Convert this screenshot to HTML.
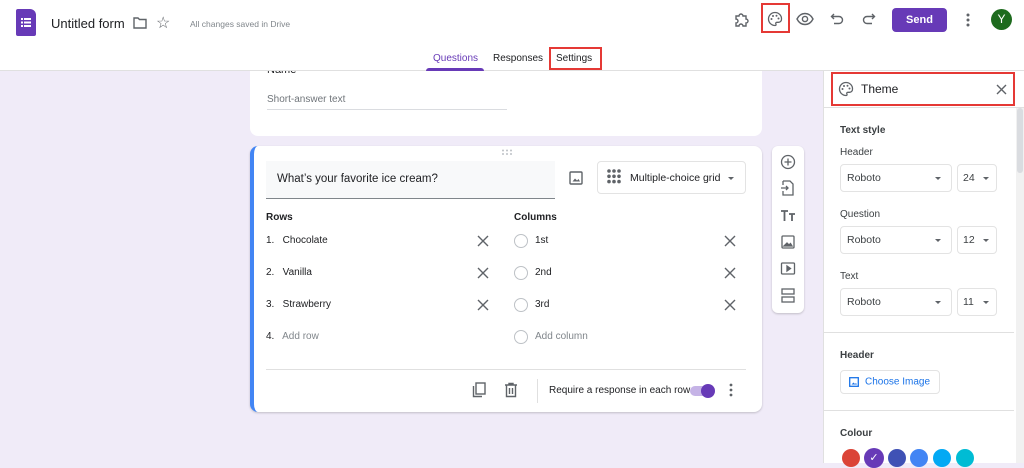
<!DOCTYPE html>
<html><head><meta charset="utf-8"><style>
*{box-sizing:border-box;margin:0;padding:0}
body{width:1024px;height:463px;overflow:hidden;background:#f0ebf8;font-family:"Liberation Sans",Arial,sans-serif;color:#202124;position:relative}
.a{position:absolute}
.t{position:absolute;white-space:nowrap}
.sel{position:absolute;border:1px solid #e3e3e3;border-radius:4px;background:#fff;font-size:10.5px;color:#3c4043}
.sel span{position:absolute;top:50%;transform:translateY(-50%)}
.car{position:absolute;width:0;height:0;border-left:3.5px solid transparent;border-right:3.5px solid transparent;border-top:3.5px solid #5f6368}
.rad{position:absolute;width:14px;height:14px;border:1.5px solid #bdc1c6;border-radius:50%}
.f{font-size:10px}
</style></head><body>
<div class="a" style="left:0;top:0;width:1024px;height:71px;background:#fff;border-bottom:1px solid #e0e0e0"></div>
<div class="a" style="left:16px;top:9px;width:20px;height:27px;background:#673ab7;border-radius:2px 6px 2px 2px"></div>
<svg class="a" style="left:19px;top:15px" width="14" height="14"><g fill="#fff"><rect x="2" y="3" width="2" height="2"/><rect x="5" y="3" width="7" height="2"/><rect x="2" y="6.5" width="2" height="2"/><rect x="5" y="6.5" width="7" height="2"/><rect x="2" y="10" width="2" height="2"/><rect x="5" y="10" width="7" height="2"/></g></svg>
<div class="t" style="left:51px;top:16px;font-size:13px;color:#202124">Untitled form</div>
<svg class="a" style="left:133px;top:17px" width="14" height="12"><path d="M1 1h4l1.5 1.5H13V11H1z" fill="none" stroke="#5f6368" stroke-width="1.4"/></svg>
<div class="t" style="left:156px;top:13px;font-size:16px;color:#5f6368">☆</div>
<div class="t" style="left:190px;top:19px;font-size:8.5px;color:#80868b">All changes saved in Drive</div>
<svg class="a" style="left:733px;top:12px" width="16" height="16"><path d="M3 4h3a2 2 0 014 0h3v3a2 2 0 010 4v3H10a2 2 0 00-4 0H3v-3a2 2 0 000-4z" fill="none" stroke="#5f6368" stroke-width="1.4"/></svg>
<div class="a" style="left:761px;top:3px;width:29px;height:30px;border:2px solid #e53935"></div>
<svg class="a" style="left:767px;top:11px" width="16" height="16"><path d="M8 1.5a6.5 6.5 0 000 13c1 0 1.3-.8.9-1.5-.5-.8 0-1.7 1-1.7h1.6A3 3 0 0014.5 8 6.5 6.2 0 008 1.5z" fill="none" stroke="#5f6368" stroke-width="1.3"/><circle cx="4.5" cy="8" r="1" fill="#5f6368"/><circle cx="6" cy="5" r="1" fill="#5f6368"/><circle cx="9.5" cy="4.8" r="1" fill="#5f6368"/><circle cx="11.5" cy="7.5" r="1" fill="#5f6368"/></svg>
<svg class="a" style="left:796px;top:12px" width="18" height="14"><path d="M1 7c2-4 5-5.5 8-5.5S15 3 17 7c-2 4-5 5.5-8 5.5S3 11 1 7z" fill="none" stroke="#5f6368" stroke-width="1.4"/><circle cx="9" cy="7" r="2.6" fill="none" stroke="#5f6368" stroke-width="1.4"/></svg>
<svg class="a" style="left:830px;top:12px" width="14" height="14"><path d="M4 2L1.5 4.5 4 7M1.5 4.5H9a3.5 3.5 0 010 7H4" fill="none" stroke="#5f6368" stroke-width="1.4"/></svg>
<svg class="a" style="left:862px;top:12px" width="14" height="14"><path d="M10 2l2.5 2.5L10 7M12.5 4.5H5a3.5 3.5 0 000 7h5" fill="none" stroke="#5f6368" stroke-width="1.4"/></svg>
<div class="a" style="left:892px;top:8px;width:55px;height:24px;background:#673ab7;border-radius:4px;color:#fff;font-size:11px;font-weight:bold;text-align:center;line-height:24px">Send</div>
<svg class="a" style="left:965px;top:12px" width="6" height="16"><circle cx="3" cy="3" r="1.5" fill="#5f6368"/><circle cx="3" cy="8" r="1.5" fill="#5f6368"/><circle cx="3" cy="13" r="1.5" fill="#5f6368"/></svg>
<div class="a" style="left:991px;top:9px;width:21px;height:21px;border-radius:50%;background:#1e6b1e;color:#fff;font-size:12px;text-align:center;line-height:21px">Y</div>
<div class="t" style="left:433px;top:53px;font-size:10px;color:#673ab7">Questions</div>
<div class="a" style="left:426px;top:68px;width:58px;height:3px;background:#673ab7;border-radius:3px 3px 0 0"></div>
<div class="t" style="left:493px;top:53px;font-size:10px;color:#202124">Responses</div>
<div class="a" style="left:549px;top:47px;width:53px;height:23px;border:2px solid #e53935"></div>
<div class="t" style="left:556px;top:53px;font-size:10px;color:#202124">Settings</div>

<div class="a" style="left:250px;top:71px;width:512px;height:65px;background:#fff;border-radius:0 0 8px 8px;overflow:hidden">
<div class="t" style="left:17px;top:-7px;font-size:11px">Name</div>
<div class="t" style="left:17px;top:23px;font-size:10px;color:#70757a">Short-answer text</div>
<div class="a" style="left:17px;top:38px;width:240px;height:1px;background:#dadce0"></div>
</div>

<div class="a" style="left:250px;top:146px;width:512px;height:266px;background:#fff;border-radius:8px;border-left:4px solid #4285f4;box-shadow:0 1px 2px rgba(0,0,0,.2)"></div>
<svg class="a" style="left:501px;top:149px" width="12" height="7"><g fill="#bdc1c6"><circle cx="2" cy="1.5" r="1"/><circle cx="6" cy="1.5" r="1"/><circle cx="10" cy="1.5" r="1"/><circle cx="2" cy="5" r="1"/><circle cx="6" cy="5" r="1"/><circle cx="10" cy="5" r="1"/></g></svg>
<div class="a" style="left:266px;top:161px;width:289px;height:38px;background:#f8f9fa;border-bottom:1px solid #80868b"></div>
<div class="t" style="left:277px;top:173px;font-size:11.5px">What’s your favorite ice cream?</div>
<svg class="a" style="left:569px;top:171px" width="14" height="14"><rect x="1" y="1" width="12" height="12" rx="1" fill="none" stroke="#5f6368" stroke-width="1.4"/><path d="M3.5 10.5l2.5-3 2 2 1.5-1.5 1.5 2.5z" fill="#5f6368"/></svg>
<div class="sel" style="left:597px;top:161px;width:149px;height:33px;font-size:10.5px;color:#202124"><span style="left:32px">Multiple-choice grid</span><div class="car" style="left:130px;top:15px"></div></div>
<svg class="a" style="left:607px;top:169px" width="14" height="15"><g fill="#5f6368"><circle cx="2" cy="2" r="1.8"/><circle cx="7" cy="2" r="1.8"/><circle cx="12" cy="2" r="1.8"/><circle cx="2" cy="7.3" r="1.8"/><circle cx="7" cy="7.3" r="1.8"/><circle cx="12" cy="7.3" r="1.8"/><circle cx="2" cy="12.6" r="1.8"/><circle cx="7" cy="12.6" r="1.8"/><circle cx="12" cy="12.6" r="1.8"/></g></svg>
<div class="t" style="left:266px;top:212px;font-size:10px;font-weight:bold;color:#202124">Rows</div>
<div class="t" style="left:514px;top:212px;font-size:10px;font-weight:bold;color:#202124">Columns</div>
<div class="t f" style="left:266px;top:235px">1.&nbsp;&nbsp; Chocolate</div>
<div class="t f" style="left:266px;top:267px">2.&nbsp;&nbsp; Vanilla</div>
<div class="t f" style="left:266px;top:299px">3.&nbsp;&nbsp; Strawberry</div>
<div class="t f" style="left:266px;top:331px">4.&nbsp;&nbsp; <span style="color:#80868b">Add row</span></div>
<div class="rad" style="left:514px;top:234px"></div><div class="t f" style="left:535px;top:235px">1st</div>
<div class="rad" style="left:514px;top:266px"></div><div class="t f" style="left:535px;top:267px">2nd</div>
<div class="rad" style="left:514px;top:298px"></div><div class="t f" style="left:535px;top:299px">3rd</div>
<div class="rad" style="left:514px;top:330px"></div><div class="t f" style="left:535px;top:331px;color:#80868b">Add column</div>
<svg class="a" style="left:0;top:0;pointer-events:none" width="1024" height="463"><g stroke="#5f6368" stroke-width="1.4"><path d="M478 236l10 10M488 236l-10 10M478 268l10 10M488 268l-10 10M478 300l10 10M488 300l-10 10M725 236l10 10M735 236l-10 10M725 268l10 10M735 268l-10 10M725 300l10 10M735 300l-10 10"/></g></svg>
<div class="a" style="left:266px;top:369px;width:480px;height:1px;background:#e0e0e0"></div>
<svg class="a" style="left:472px;top:382px" width="14" height="16"><rect x="4" y="1" width="9" height="11" fill="none" stroke="#5f6368" stroke-width="1.4"/><path d="M1.5 4v10.5H10" fill="none" stroke="#5f6368" stroke-width="1.4"/></svg>
<svg class="a" style="left:504px;top:382px" width="14" height="16"><path d="M1 3h12M5 3V1.5h4V3M2.5 3v11.5h9V3M5.5 6v6M8.5 6v6" fill="none" stroke="#5f6368" stroke-width="1.4"/></svg>
<div class="a" style="left:537px;top:379px;width:1px;height:24px;background:#e0e0e0"></div>
<div class="t" style="left:549px;top:385px;font-size:10px;color:#202124">Require a response in each row</div>
<div class="a" style="left:690px;top:386px;width:24px;height:10px;border-radius:5px;background:#c5b3e6"></div>
<div class="a" style="left:701px;top:384px;width:14px;height:14px;border-radius:50%;background:#673ab7"></div>
<svg class="a" style="left:728px;top:383px" width="6" height="16"><circle cx="3" cy="2" r="1.4" fill="#5f6368"/><circle cx="3" cy="7" r="1.4" fill="#5f6368"/><circle cx="3" cy="12" r="1.4" fill="#5f6368"/></svg>

<div class="a" style="left:772px;top:146px;width:32px;height:167px;background:#fff;border-radius:6px;box-shadow:0 1px 2px rgba(0,0,0,.2)"></div>
<svg class="a" style="left:780px;top:154px" width="16" height="155"><g fill="none" stroke="#5f6368" stroke-width="1.3">
<circle cx="8" cy="8" r="6.5"/><path d="M8 4.5v7M4.5 8h7"/>
<path d="M3 27h7l3 3v11H3v-4M3 31v-4M1 34h7M6 32l2 2-2 2"/>
<path d="M1 57h7M4.5 57v10M9 60h6M12 60v7" stroke-width="1.8"/>
<rect x="2" y="82" width="12" height="12" rx="1"/><path d="M4 92l3-3 2 2 1.5-1.5L12 92z" fill="#5f6368"/>
<rect x="1.5" y="109" width="13" height="11" rx="1"/><path d="M7 112v5l3.5-2.5z" fill="#5f6368"/>
<rect x="2" y="135" width="12" height="5"/><rect x="2" y="143" width="12" height="5"/></g></svg>

<div class="a" style="left:823px;top:71px;width:201px;height:392px;background:#fff;border-left:1px solid #e0e0e0"></div>
<div class="a" style="left:823px;top:107px;width:201px;height:1px;background:#e0e0e0"></div>
<div class="a" style="left:1016px;top:108px;width:8px;height:355px;background:#f1f1f1"></div>
<div class="a" style="left:1017px;top:108px;width:6px;height:65px;background:#dadce0;border-radius:3px"></div>
<div class="a" style="left:831px;top:72px;width:184px;height:34px;border:2px solid #e53935"></div>
<svg class="a" style="left:838px;top:81px" width="16" height="16"><path d="M8 1.5a6.5 6.5 0 000 13c1 0 1.3-.8.9-1.5-.5-.8 0-1.7 1-1.7h1.6A3 3 0 0014.5 8 6.5 6.2 0 008 1.5z" fill="none" stroke="#5f6368" stroke-width="1.3"/><circle cx="4.5" cy="8" r="1" fill="#5f6368"/><circle cx="6" cy="5" r="1" fill="#5f6368"/><circle cx="9.5" cy="4.8" r="1" fill="#5f6368"/><circle cx="11.5" cy="7.5" r="1" fill="#5f6368"/></svg>
<div class="t" style="left:861px;top:82px;font-size:12px;color:#202124">Theme</div>
<svg class="a" style="left:996px;top:84px" width="11" height="11"><path d="M1 1l9 9M10 1l-9 9" stroke="#5f6368" stroke-width="1.4"/></svg>
<div class="t" style="left:840px;top:125px;font-size:10px;font-weight:bold;color:#3c4043">Text style</div>
<div class="t" style="left:840px;top:147px;font-size:10px;color:#3c4043">Header</div>
<div class="sel" style="left:840px;top:164px;width:112px;height:28px"><span style="left:6px">Roboto</span><div class="car" style="left:94px;top:12px"></div></div>
<div class="sel" style="left:957px;top:164px;width:40px;height:28px"><span style="left:5px">24</span><div class="car" style="left:25px;top:12px"></div></div>
<div class="t" style="left:840px;top:209px;font-size:10px;color:#3c4043">Question</div>
<div class="sel" style="left:840px;top:226px;width:112px;height:28px"><span style="left:6px">Roboto</span><div class="car" style="left:94px;top:12px"></div></div>
<div class="sel" style="left:957px;top:226px;width:40px;height:28px"><span style="left:5px">12</span><div class="car" style="left:25px;top:12px"></div></div>
<div class="t" style="left:840px;top:271px;font-size:10px;color:#3c4043">Text</div>
<div class="sel" style="left:840px;top:288px;width:112px;height:28px"><span style="left:6px">Roboto</span><div class="car" style="left:94px;top:12px"></div></div>
<div class="sel" style="left:957px;top:288px;width:40px;height:28px"><span style="left:5px">11</span><div class="car" style="left:25px;top:12px"></div></div>
<div class="a" style="left:824px;top:332px;width:190px;height:1px;background:#e0e0e0"></div>
<div class="t" style="left:840px;top:350px;font-size:10px;font-weight:bold;color:#3c4043">Header</div>
<div class="sel" style="left:840px;top:370px;width:100px;height:24px;color:#1a73e8;font-size:10px"><span style="left:24px">Choose Image</span></div>
<svg class="a" style="left:849px;top:377px" width="10" height="10"><rect x=".7" y=".7" width="8.6" height="8.6" fill="none" stroke="#1a73e8" stroke-width="1.3"/><path d="M2.5 7.5l2-2 1.5 1.5 1-1 1 1.5z" fill="#1a73e8"/></svg>
<div class="a" style="left:824px;top:410px;width:190px;height:1px;background:#e0e0e0"></div>
<div class="t" style="left:840px;top:428px;font-size:10px;font-weight:bold;color:#3c4043">Colour</div>
<div class="a" style="left:842px;top:449px;width:18px;height:18px;border-radius:50%;background:#db4437"></div>
<div class="a" style="left:864px;top:448px;width:20px;height:20px;border-radius:50%;background:#673ab7;color:#fff;font-size:11px;text-align:center;line-height:20px">✓</div>
<div class="a" style="left:888px;top:449px;width:18px;height:18px;border-radius:50%;background:#3f51b5"></div>
<div class="a" style="left:910px;top:449px;width:18px;height:18px;border-radius:50%;background:#4285f4"></div>
<div class="a" style="left:933px;top:449px;width:18px;height:18px;border-radius:50%;background:#03a9f4"></div>
<div class="a" style="left:956px;top:449px;width:18px;height:18px;border-radius:50%;background:#00bcd4"></div>
</body></html>
